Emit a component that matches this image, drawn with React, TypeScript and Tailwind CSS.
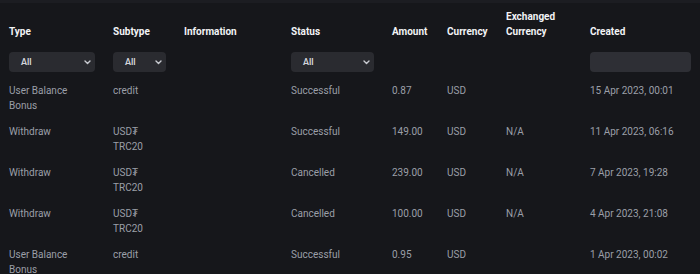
import React from "react";

const rows = [
  { type: "User Balance Bonus", subtype: "credit", info: "", status: "Successful", amount: "0.87", cur: "USD", ex: "", created: "15 Apr 2023, 00:01" },
  { type: "Withdraw", subtype: "USD₮ TRC20", info: "", status: "Successful", amount: "149.00", cur: "USD", ex: "N/A", created: "11 Apr 2023, 06:16" },
  { type: "Withdraw", subtype: "USD₮ TRC20", info: "", status: "Cancelled", amount: "239.00", cur: "USD", ex: "N/A", created: "7 Apr 2023, 19:28" },
  { type: "Withdraw", subtype: "USD₮ TRC20", info: "", status: "Cancelled", amount: "100.00", cur: "USD", ex: "N/A", created: "4 Apr 2023, 21:08" },
  { type: "User Balance Bonus", subtype: "credit", info: "", status: "Successful", amount: "0.95", cur: "USD", ex: "", created: "1 Apr 2023, 00:02" },
];

function Select() {
  return (
    <div className="flex h-[20px] w-full items-center justify-between rounded-[4px] bg-[#2a2b30] pl-[12px] pr-[4px]">
      <span className="text-[9px] font-semibold leading-none text-[#d4d6db]">All</span>
      <svg width="7" height="5" viewBox="0 0 7 5" className="shrink-0">
        <path d="M1 1l2.5 2.5L6 1" fill="none" stroke="#c9cbd1" strokeWidth="1.4" strokeLinecap="round" strokeLinejoin="round" />
      </svg>
    </div>
  );
}

export default function App() {
  const th = "px-[9px] pt-[6px] pb-[9px] text-left align-bottom text-[10px] font-bold leading-[15px] text-[#f2f3f5]";
  const fc = "px-[9px] pt-[4px] pb-[5px] align-top";
  const td = "px-[9px] pt-[6px] pb-[5px] align-top text-[10px] leading-[15px] text-[#9b9fa8]";
  return (
    <div className="h-[274px] w-[700px] overflow-hidden bg-[#16171b]" style={{ fontFamily: "Roboto, 'Liberation Sans', sans-serif" }}>
      <div className="h-[3px] bg-[#1c1d22]" />
      <table className="w-[700px] table-fixed border-collapse">
        <colgroup>
          <col className="w-[104px]" />
          <col className="w-[71px]" />
          <col className="w-[107px]" />
          <col className="w-[101px]" />
          <col className="w-[55px]" />
          <col className="w-[59px]" />
          <col className="w-[84px]" />
          <col className="w-[119px]" />
        </colgroup>
        <thead>
          <tr>
            <th className={th}>Type</th>
            <th className={th}>Subtype</th>
            <th className={th}>Information</th>
            <th className={th}>Status</th>
            <th className={th}>Amount</th>
            <th className={th}>Currency</th>
            <th className={th}>Exchanged Currency</th>
            <th className={th}>Created</th>
          </tr>
          <tr>
            <td className={fc}><Select /></td>
            <td className={fc}><Select /></td>
            <td className={fc}></td>
            <td className={fc}><Select /></td>
            <td className={fc}></td>
            <td className={fc}></td>
            <td className={fc}></td>
            <td className={fc}><div className="h-[20px] w-full rounded-[4px] bg-[#2e2f35]" /></td>
          </tr>
        </thead>
        <tbody>
          {rows.map((r, i) => (
            <tr key={i}>
              <td className={td}>{r.type}</td>
              <td className={td}>{r.subtype}</td>
              <td className={td}>{r.info}</td>
              <td className={td}>{r.status}</td>
              <td className={td}>{r.amount}</td>
              <td className={td}>{r.cur}</td>
              <td className={td}>{r.ex}</td>
              <td className={td}>{r.created}</td>
            </tr>
          ))}
        </tbody>
      </table>
    </div>
  );
}
